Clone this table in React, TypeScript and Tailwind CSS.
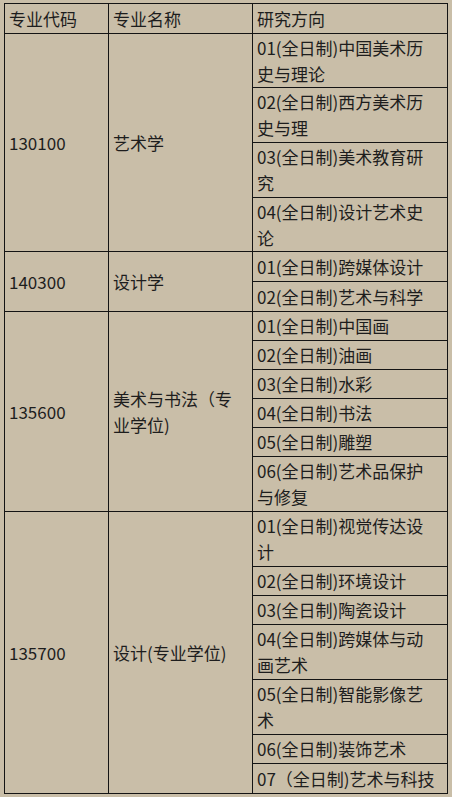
import React from "react";

type Group = { code: string; name: React.ReactNode; dirs: { text: React.ReactNode; h: number }[] };

const groups: Group[] = [
  {
    code: "130100",
    name: "艺术学",
    dirs: [
      { text: <>01(全日制)中国美术历<br />史与理论</>, h: 54 },
      { text: <>02(全日制)西方美术历<br />史与理</>, h: 55 },
      { text: <>03(全日制)美术教育研<br />究</>, h: 55 },
      { text: <>04(全日制)设计艺术史<br />论</>, h: 54 },
    ],
  },
  {
    code: "140300",
    name: "设计学",
    dirs: [
      { text: "01(全日制)跨媒体设计", h: 30 },
      { text: "02(全日制)艺术与科学", h: 30 },
    ],
  },
  {
    code: "135600",
    name: <>美术与书法（专<br />业学位)</>,
    dirs: [
      { text: "01(全日制)中国画", h: 29 },
      { text: "02(全日制)油画", h: 29 },
      { text: "03(全日制)水彩", h: 29 },
      { text: "04(全日制)书法", h: 29 },
      { text: "05(全日制)雕塑", h: 29 },
      { text: <>06(全日制)艺术品保护<br />与修复</>, h: 55 },
    ],
  },
  {
    code: "135700",
    name: "设计(专业学位)",
    dirs: [
      { text: <>01(全日制)视觉传达设<br />计</>, h: 55 },
      { text: "02(全日制)环境设计", h: 29 },
      { text: "03(全日制)陶瓷设计", h: 29 },
      { text: <>04(全日制)跨媒体与动<br />画艺术</>, h: 55 },
      { text: <>05(全日制)智能影像艺<br />术</>, h: 55 },
      { text: "06(全日制)装饰艺术", h: 29 },
      { text: "07（全日制)艺术与科技", h: 30 },
    ],
  },
];

export default function App() {
  return (
    <div
      className="w-[452px] h-[797px] bg-[#c9bea8] text-[#1d1d1d] pt-[3px] pl-[4px] overflow-hidden"
      style={{ fontFamily: '"Noto Sans CJK SC", "Noto Sans", sans-serif' }}
    >
      <table className="border-collapse table-fixed w-[443px] text-[17px] leading-[26px]">
        <colgroup>
          <col className="w-[104px]" />
          <col className="w-[144px]" />
          <col className="w-[195px]" />
        </colgroup>
        <tbody>
          <tr className="h-[30px]">
            <td className="border border-[#141414] px-[4px] py-0 align-middle">专业代码</td>
            <td className="border border-[#141414] px-[4px] py-0 align-middle">专业名称</td>
            <td className="border border-[#141414] px-[4px] py-0 align-middle">研究方向</td>
          </tr>
          {groups.map((g) =>
            g.dirs.map((d, i) => (
              <tr key={g.code + i} style={{ height: d.h }}>
                {i === 0 && (
                  <>
                    <td rowSpan={g.dirs.length} className="border border-[#141414] px-[4px] py-0 align-middle">
                      {g.code}
                    </td>
                    <td rowSpan={g.dirs.length} className="border border-[#141414] px-[4px] py-0 align-middle">
                      {g.name}
                    </td>
                  </>
                )}
                <td className="border border-[#141414] px-[4px] py-0 align-middle">{d.text}</td>
              </tr>
            ))
          )}
        </tbody>
      </table>
    </div>
  );
}
